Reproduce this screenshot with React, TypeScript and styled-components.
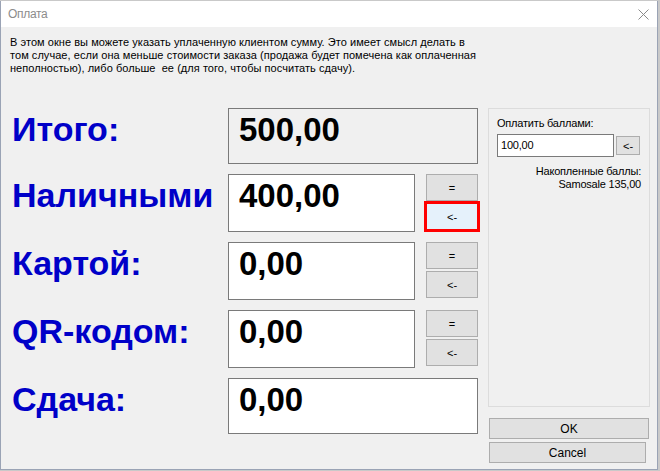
import styled, { createGlobalStyle, css } from "styled-components";

const GlobalStyle = createGlobalStyle`
  html, body {
    margin: 0;
    padding: 0;
    background: #c9c9c9;
  }
  body {
    width: 660px;
    height: 471px;
    overflow: hidden;
    font-family: "Liberation Sans", Arial, sans-serif;
  }
`;

const Window = styled.div`
  box-sizing: border-box;
  margin-top: 1px;
  width: 658px;
  height: 469px;
  border: 1px solid #9aa3b5;
  border-top: none;
  background: #f0f0f0;
  display: flex;
  flex-direction: column;
`;

const TitleBar = styled.div`
  height: 26px;
  background: #ffffff;
  display: flex;
  align-items: center;
  justify-content: space-between;
  padding: 0 8px 0 7px;
`;

const Title = styled.span`
  font-size: 12px;
  color: #8c8c8c;
  letter-spacing: -0.3px;
`;

const Body = styled.div`
  flex: 1;
  display: flex;
  flex-direction: column;
  padding: 9px 0 0 9px;
`;

const Description = styled.p`
  margin: 0;
  font-size: 11px;
  line-height: 13px;
  color: #000;
  letter-spacing: 0.05px;
`;

const Content = styled.div`
  display: flex;
  gap: 10px;
  margin-top: 33px;
  padding-left: 2px;
`;

const Payments = styled.div`
  display: grid;
  grid-template-columns: 205px 187px 52px;
  grid-template-rows: 56px 58px 58px 58px 56px;
  column-gap: 11px;
  row-gap: 10px;
`;

const Label = styled.div`
  padding-top: 2px;
  font-size: 34px;
  font-weight: bold;
  color: #0000c8;
  white-space: nowrap;
`;

const ValueBox = styled.div<{ $readOnly?: boolean; $wide?: boolean }>`
  box-sizing: border-box;
  border: 1px solid #7a7a7a;
  background: ${(p) => (p.$readOnly ? "#f0f0f0" : "#ffffff")};
  padding: 2px 0 0 10px;
  font-size: 33px;
  font-weight: bold;
  color: #000;
  ${(p) =>
    p.$wide &&
    css`
      grid-column: 2 / span 2;
    `}
`;

const ButtonStack = styled.div`
  display: flex;
  flex-direction: column;
  gap: 2px;
`;

const Button = styled.button<{ $focused?: boolean }>`
  box-sizing: border-box;
  height: 27px;
  padding: 0;
  border: 1px solid #adadad;
  background: #e1e1e1;
  font-family: "Liberation Sans", Arial, sans-serif;
  font-size: 11px;
  color: #000;
  ${(p) =>
    p.$focused &&
    css`
      background: #e5f1fb;
      outline: 3px solid #ff0000;
      outline-offset: -1px;
    `}
`;

const Side = styled.div`
  width: 162px;
  display: flex;
  flex-direction: column;
`;

const GroupBox = styled.div`
  box-sizing: border-box;
  height: 299px;
  border: 1px solid #dcdcdc;
  padding: 8px 8px 0 8px;
  font-size: 11px;
  line-height: 13px;
  letter-spacing: -0.2px;
`;

const PointsRow = styled.div`
  display: flex;
  align-items: center;
  gap: 2px;
  margin-top: 4px;
`;

const PointsInput = styled.div`
  box-sizing: border-box;
  width: 117px;
  height: 23px;
  border: 1px solid #7a7a7a;
  background: #fff;
  padding-left: 3px;
  display: flex;
  align-items: center;
  font-size: 11px;
`;

const SmallButton = styled(Button)`
  width: 24px;
  height: 19px;
`;

const Accumulated = styled.div`
  margin-top: 8px;
  text-align: right;
`;

const DialogButton = styled(Button)<{ $width: number }>`
  height: 21px;
  width: ${(p) => p.$width}px;
  font-size: 12px;
`;

const DialogButtons = styled.div`
  display: flex;
  flex-direction: column;
  gap: 3px;
  margin-top: 11px;
  padding-left: 1px;
`;

function CloseIcon() {
  return (
    <svg width="11" height="11" viewBox="0 0 11 11">
      <path d="M0.5 0.5L10.5 10.5M10.5 0.5L0.5 10.5" stroke="#8a8a8a" strokeWidth="1" />
    </svg>
  );
}

interface RowProps {
  label: string;
  value: string;
  focused?: boolean;
}

function PaymentRow({ label, value, focused }: RowProps) {
  return (
    <>
      <Label>{label}</Label>
      <ValueBox>{value}</ValueBox>
      <ButtonStack>
        <Button>=</Button>
        <Button $focused={focused}>{"<-"}</Button>
      </ButtonStack>
    </>
  );
}

export default function App() {
  return (
    <>
      <GlobalStyle />
      <Window>
        <TitleBar>
          <Title>Оплата</Title>
          <CloseIcon />
        </TitleBar>
        <Body>
          <Description>
            В этом окне вы можете указать уплаченную клиентом сумму. Это имеет смысл делать в
            <br />
            том случае, если она меньше стоимости заказа (продажа будет помечена как оплаченная
            <br />
            неполностью), либо больше&nbsp; ее (для того, чтобы посчитать сдачу).
          </Description>
          <Content>
            <Payments>
              <Label>Итого:</Label>
              <ValueBox $readOnly $wide>
                500,00
              </ValueBox>
              <PaymentRow label="Наличными" value="400,00" focused />
              <PaymentRow label="Картой:" value="0,00" />
              <PaymentRow label="QR-кодом:" value="0,00" />
              <Label>Сдача:</Label>
              <ValueBox $wide>0,00</ValueBox>
            </Payments>
            <Side>
              <GroupBox>
                <div>Оплатить баллами:</div>
                <PointsRow>
                  <PointsInput>100,00</PointsInput>
                  <SmallButton>{"<-"}</SmallButton>
                </PointsRow>
                <Accumulated>
                  Накопленные баллы:
                  <br />
                  Samosale 135,00
                </Accumulated>
              </GroupBox>
              <DialogButtons>
                <DialogButton $width={160}>OK</DialogButton>
                <DialogButton $width={157}>Cancel</DialogButton>
              </DialogButtons>
            </Side>
          </Content>
        </Body>
      </Window>
    </>
  );
}
